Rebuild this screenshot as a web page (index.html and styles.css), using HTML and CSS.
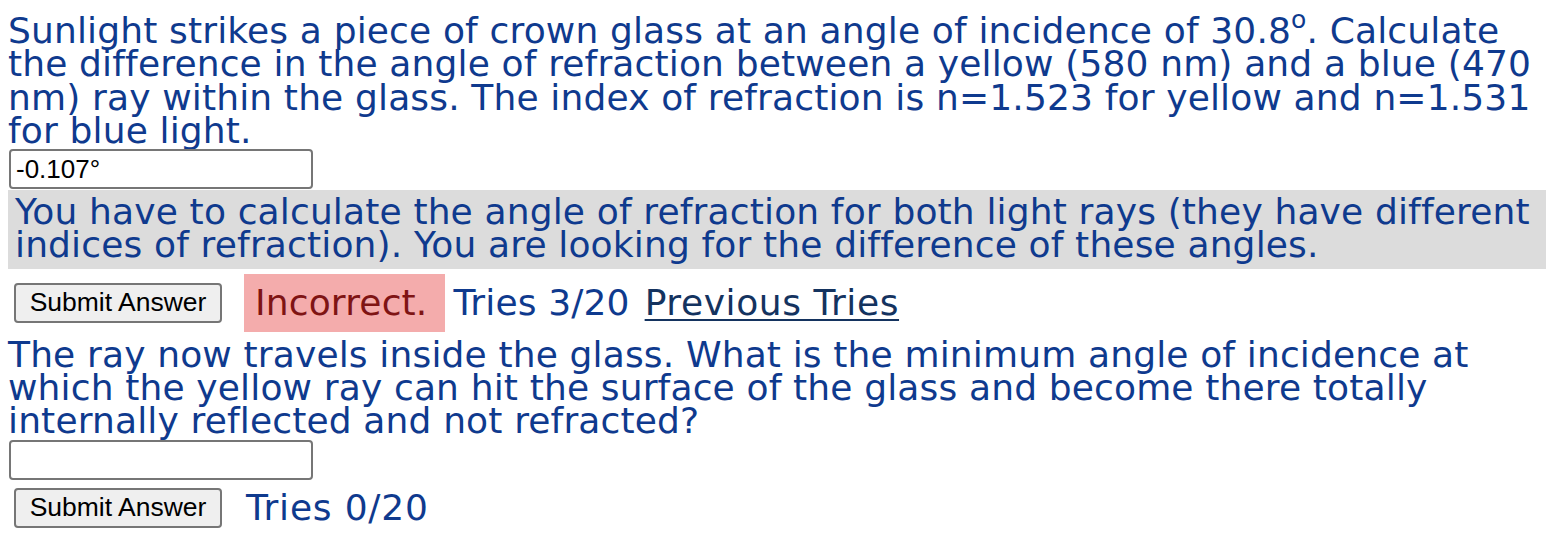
FILE: index.html
```html
<!DOCTYPE html>
<html>
<head>
<meta charset="utf-8">
<link rel="stylesheet" href="styles.css">
</head>
<body>
<div class="problem">
  <p class="question">Sunlight strikes a piece of crown glass at an angle of incidence of 30.8<sup class="deg">o</sup>. Calculate the difference in the angle of refraction between a yellow (580 nm) and a blue (470 nm) ray within the glass. The index of refraction is n=1.523 for yellow and n=1.531 for blue light.</p>
  <input class="answer" type="text" value="-0.107°">
  <div class="hint">You have to calculate the angle of refraction for both light rays (they have different indices of refraction). You are looking for the difference of these angles.</div>
  <div class="submit-row first">
    <button class="submit" type="button">Submit Answer</button>
    <span class="incorrect">Incorrect.</span>
    <span class="tries">Tries 3/20</span>
    <a class="prev" href="#">Previous Tries</a>
  </div>
  <p class="question second">The ray now travels inside the glass. What is the minimum angle of incidence at which the yellow ray can hit the surface of the glass and become there totally internally reflected and not refracted?</p>
  <input class="answer" type="text" value="">
  <div class="submit-row last">
    <button class="submit" type="button">Submit Answer</button>
    <span class="tries t0">Tries 0/20</span>
  </div>
</div>
</body>
</html>
```
FILE: styles.css
```css
html, body {
  margin: 0;
  padding: 0;
  background: #ffffff;
}
body {
  padding: 14px 8px 0 8px;
  font-family: "DejaVu Sans", Verdana, sans-serif;
  font-size: 36px;
  line-height: 33.3px;
  letter-spacing: 0.15px;
  color: #0f3a8e;
}
.problem {
  display: flex;
  flex-direction: column;
  align-items: flex-start;
}
.question {
  margin: 0;
}
.question.second {
  margin-top: 6px;
}
.deg {
  font-size: 25px;
  line-height: 0;
  vertical-align: 15px;
}
.answer {
  box-sizing: border-box;
  width: 304px;
  height: 40px;
  margin: 2px 0 0 1px;
  padding: 2px 5px;
  border: 2px solid #767676;
  border-radius: 4px;
  font-family: "Liberation Sans", Arial, sans-serif;
  font-size: 26px;
  letter-spacing: 0;
  color: #000;
  background: #fff;
}
.hint {
  align-self: stretch;
  margin: 1px 8px 0 0;
  padding: 5px 7px 7px 7px;
  background: #dcdcdc;
}
.submit-row {
  display: flex;
  align-items: center;
  white-space: nowrap;
}
.submit-row.first {
  margin-top: 5px;
  height: 58px;
}
.submit-row.last {
  margin-top: 8px;
  height: 40px;
}
.submit {
  box-sizing: border-box;
  width: 208px;
  height: 40px;
  margin-left: 6px;
  padding: 0;
  border: 2px solid #767676;
  border-radius: 4px;
  background: #efefef;
  font-family: "Liberation Sans", Arial, sans-serif;
  font-size: 26.5px;
  letter-spacing: 0;
  color: #000;
}
.incorrect {
  margin-left: 22px;
  padding: 8px 18px 8px 11px;
  background: #f4acac;
  color: #7f1414;
  line-height: 41.9px;
}
.tries {
  margin-left: 8px;
}
.tries.t0 {
  margin-left: 24px;
  line-height: 34px;
  letter-spacing: 0.8px;
}
.prev {
  margin-left: 15px;
  color: #14335f;
  letter-spacing: 0.6px;
  text-decoration: underline;
  text-decoration-thickness: 2px;
  text-underline-offset: 4px;
}
```
